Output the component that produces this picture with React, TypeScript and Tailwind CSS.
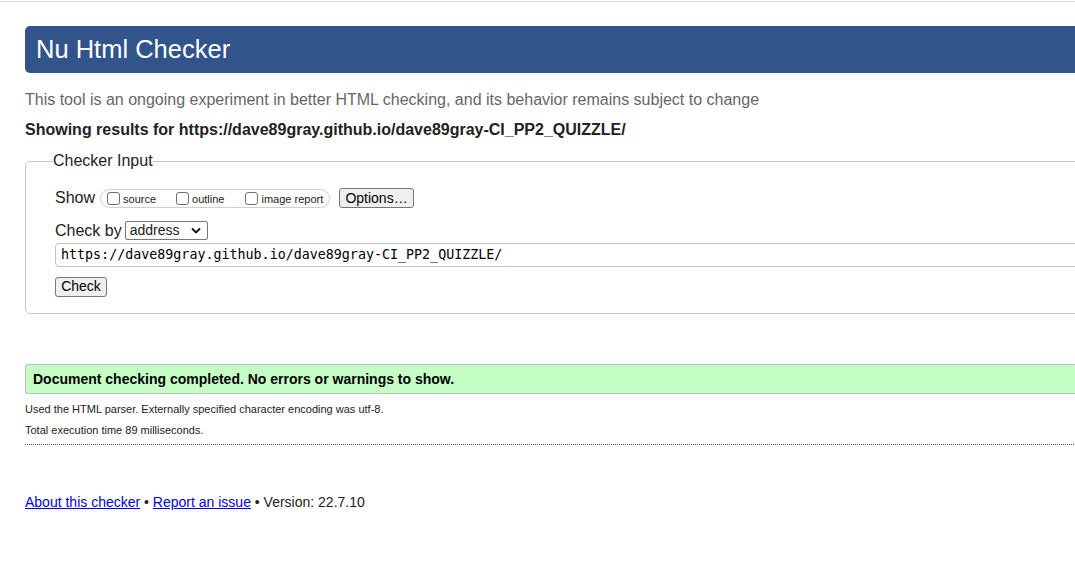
import React from 'react';

const sans = { fontFamily: '"Liberation Sans", Arial, sans-serif' };

function Box({ label }: { label: string }) {
  return (
    <span className="inline-flex items-center">
      <span className="inline-block w-[13px] h-[13px] border border-[#6f6f6f] rounded-[3px] bg-white" />
      <span className="ml-[3px] mt-[2px] text-[11px] text-[#222]">{label}</span>
    </span>
  );
}

function Btn({ children, className = '' }: { children: React.ReactNode; className?: string }) {
  return (
    <span
      className={`inline-flex items-center justify-center h-[20px] border border-[#767676] rounded-[3px] bg-[#efefef] text-[14px] text-black ${className}`}
    >
      {children}
    </span>
  );
}

export default function App() {
  return (
    <div className="w-full h-[580px] overflow-hidden bg-white" style={sans}>
      <div className="h-px mt-px bg-[#dedede]" />
      <div className="w-[1120px] pl-[25px] pt-[24px] text-[#222]">
        {/* Title bar */}
        <div className="h-[47px] bg-[#31548b] rounded-l-[5px] flex items-center pl-[11px]">
          <h1 className="text-white text-[25.5px] leading-none">Nu Html Checker</h1>
        </div>

        <p className="mt-[18px] text-[16px] leading-[18px] text-[#666]">
          This tool is an ongoing experiment in better HTML checking, and its behavior remains subject to change
        </p>
        <p className="mt-[12px] text-[16px] leading-[18px] font-bold text-[#222]">
          Showing results for https://dave89gray.github.io/dave89gray-CI_PP2_QUIZZLE/
        </p>

        {/* Checker input */}
        <fieldset className="mt-[13px] border border-[#c8c8c8] rounded-l-[5px] pl-[29px] pb-[15px]">
          <legend className="-ml-[2px] text-[16px] leading-[18px] text-[#222]">Checker Input</legend>

          <div className="mt-[18px] flex items-center h-[20px]">
            <span className="text-[16px] leading-none">Show</span>
            <span className="ml-[5px] h-[19px] w-[230px] flex items-center border border-[#cfcfcf] rounded-full pl-[6px]">
              <Box label="source" />
              <span className="w-[20px]" />
              <Box label="outline" />
              <span className="w-[21px]" />
              <Box label="image report" />
            </span>
            <Btn className="ml-[9px] w-[75px]">Options…</Btn>
          </div>

          <div className="mt-[13px] flex items-center h-[19px]">
            <span className="text-[16px] leading-none">Check by</span>
            <span className="ml-[3px] h-[19px] w-[83px] flex items-center justify-between border border-[#767676] rounded-[2px] bg-white pl-[4px] pr-[6px] text-[14px]">
              address
              <svg width="10" height="7" viewBox="0 0 10 7">
                <path d="M1 1.5 L5 5.5 L9 1.5" fill="none" stroke="#111" strokeWidth="1.8" />
              </svg>
            </span>
          </div>

          <div
            className="mt-[3px] h-[24px] border border-[#c4c4c4] rounded-l-[4px] flex items-center pl-[5px] text-[13.33px] text-black"
            style={{ fontFamily: '"DejaVu Sans Mono", Menlo, monospace' }}
          >
            https://dave89gray.github.io/dave89gray-CI_PP2_QUIZZLE/
          </div>

          <div className="mt-[7px]">
            <Btn className="w-[52px]">Check</Btn>
          </div>
        </fieldset>

        {/* Result */}
        <div className="mt-[50px] h-[30px] bg-[#c6ffc6] border border-[#bcbcbc] border-r-0 rounded-l-[3px] flex items-center pl-[7px]">
          <span className="text-[14px] font-bold text-black">
            Document checking completed. No errors or warnings to show.
          </span>
        </div>
        <p className="mt-[9px] text-[11px] leading-[13px] text-[#222]">
          Used the HTML parser. Externally specified character encoding was utf-8.
        </p>
        <p className="mt-[8px] text-[11px] leading-[13px] text-[#222]">
          Total execution time 89 milliseconds.
        </p>
        <div className="mt-[7px] border-t border-dotted border-[#555]" />

        <p className="mt-[49px] text-[14px] leading-[16px] text-[#222]">
          <a href="#" className="text-[#0000ee] underline">About this checker</a>
          {' • '}
          <a href="#" className="text-[#0000ee] underline">Report an issue</a>
          {' • Version: 22.7.10'}
        </p>
      </div>
    </div>
  );
}
